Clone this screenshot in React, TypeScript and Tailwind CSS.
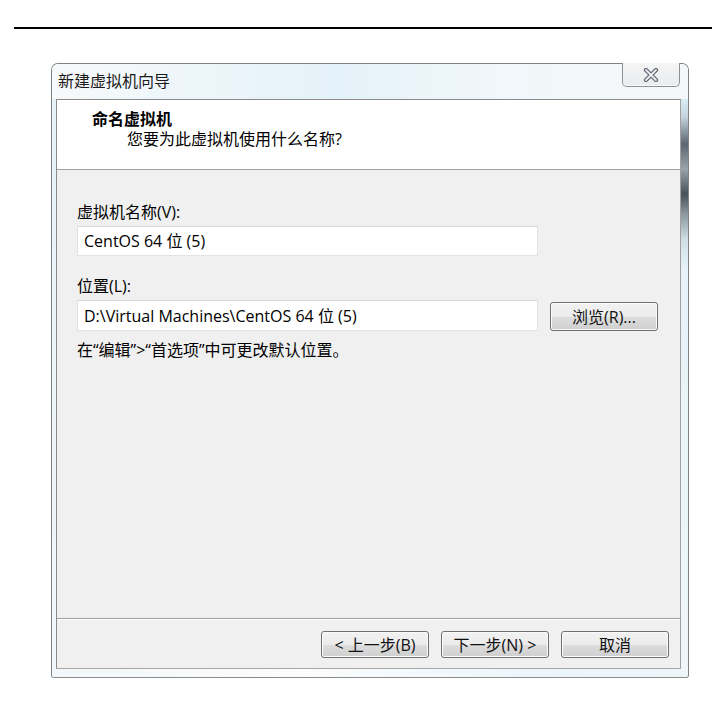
import React from "react"

const btn =
  "h-[27px] w-[108px] rounded-[3px] border border-[#707070] bg-[linear-gradient(to_bottom,#f2f2f2_0%,#ebebeb_50%,#dddddd_51%,#cfcfcf_100%)] shadow-[inset_0_0_0_1px_#fbfbfb] text-[16px] leading-[20px] text-[#111] flex items-center justify-center"

function CloseGlyph() {
  return (
    <svg width="16" height="14" viewBox="0 0 16 14">
      <path d="M3 2 L13 12 M13 2 L3 12" stroke="#5f6370" strokeWidth="4.2" strokeLinecap="round" />
      <path d="M3 2 L13 12 M13 2 L3 12" stroke="#eceef2" strokeWidth="1.8" strokeLinecap="round" />
    </svg>
  )
}

export default function App() {
  return (
    <div className="w-[722px] h-[701px] bg-white overflow-hidden font-['Open_Sans','Noto_Sans_CJK_SC',sans-serif] text-black">
      {/* top rule */}
      <div className="pt-[27px] pl-[14px] w-[712px]">
        <div className="h-[2px] bg-black" />
      </div>

      {/* window frame */}
      <div className="mt-[34px] ml-[51px] w-[638px] h-[615px] flex flex-col border border-[#7d8286] border-b-[#8c8c8c] rounded-t-[7px] rounded-b-[3px] bg-[#eef5f9]">
        {/* title bar */}
        <div className="h-[35px] flex justify-between items-start rounded-t-[6px] bg-[linear-gradient(to_right,#f7f9fa_0%,#eef6fa_20%,#e4f2f9_45%,#f1f7fa_70%,#f4f7f9_100%)]">
          <div className="pl-[6px] pt-[7px] text-[16px] leading-[20px] text-[#1a1a1a]">新建虚拟机向导</div>
          <div className="-mt-[1px] mr-[8px] w-[58px] h-[24px] rounded-b-[5px] border border-t-0 border-[#8d9196] bg-[linear-gradient(to_bottom,#f5f5f5,#e9ecee)] shadow-[inset_0_-1px_0_#fbfbfb] flex items-center justify-center">
            <CloseGlyph />
          </div>
        </div>

        <div className="flex-1 flex">
          <div className="w-[4px] bg-[linear-gradient(to_bottom,#e6f2f8,#f2f7fa)]" />

          {/* client panel */}
          <div className="flex-1 flex flex-col border border-[#8a8a8a] border-b-[#a7a7a7] border-r-[#a0a0a0]">
            {/* header */}
            <div className="h-[70px] bg-white border-b border-[#a0a0a0] pt-[9px]">
              <div className="pl-[35px] text-[16px] leading-[20px] font-bold">命名虚拟机</div>
              <div className="pl-[70px] text-[16px] leading-[20px]">您要为此虚拟机使用什么名称?</div>
            </div>

            {/* body */}
            <div className="flex-1 bg-[#f0f0f0] pl-[20px] pt-[32px] text-[16px] leading-[20px]">
              <div>虚拟机名称(V):</div>
              <div className="mt-[4px] w-[461px] h-[30px] bg-white border border-[#dfe3e8] border-t-[#d5d9de] pl-[6px] flex items-center">
                CentOS 64 位 (5)
              </div>

              <div className="mt-[20px]">位置(L):</div>
              <div className="mt-[4px] flex items-start">
                <div className="w-[461px] h-[31px] bg-white border border-[#dfe3e8] border-t-[#d5d9de] pl-[6px] flex items-center">
                  D:\Virtual Machines\CentOS 64 位 (5)
                </div>
                <div className={`${btn} ml-[12px] mt-[2px] h-[29px]`}>浏览(R)...</div>
              </div>

              <div className="mt-[9px]">在“编辑”&gt;“首选项”中可更改默认位置。</div>
            </div>

            {/* footer */}
            <div className="h-[50px] bg-[#f0f0f0] border-t border-[#a0a0a0] shadow-[inset_0_1px_0_#ffffff] flex justify-end items-start pt-[12px] pr-[11px] gap-[12px]">
              <div className={btn}>&lt; 上一步(B)</div>
              <div className={btn}>下一步(N) &gt;</div>
              <div className={btn}>取消</div>
            </div>
          </div>

          <div className="w-[7px] bg-[linear-gradient(to_bottom,#d9edf6_0px,#c4d3db_18px,#5c6670_45px,#9aa4ac_70px,#47515a_95px,#8c979f_115px,#cfdde4_140px,#e7f3f9_170px,#eef6fa_100%)]" />
        </div>

        <div className="h-[8px] rounded-b-[3px] bg-[linear-gradient(to_right,#f3f7f9,#fbfcfd_40%,#eaf5fa_80%,#eef6fa)]" />
      </div>
    </div>
  )
}
